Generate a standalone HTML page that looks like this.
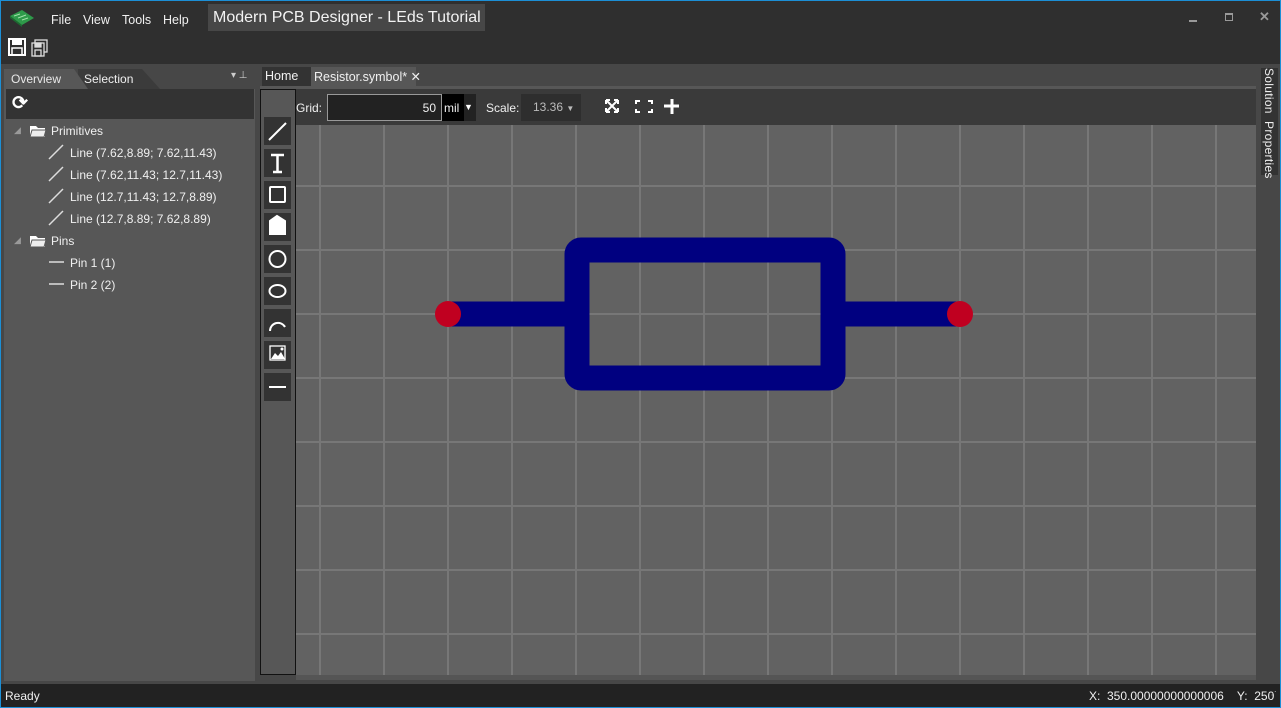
<!DOCTYPE html>
<html><head><meta charset="utf-8"><style>
*{margin:0;padding:0;box-sizing:border-box}
body{width:1281px;height:708px;overflow:hidden;background:#2f2f2f;font-family:"Liberation Sans",sans-serif;font-size:12px;color:#f0f0f0;position:relative}
.abs{position:absolute;white-space:nowrap}
#frame{position:absolute;left:0;top:0;width:1281px;height:708px;border:1px solid #1c8fd6;pointer-events:none;z-index:10}
.menu span{position:absolute;top:13px;font-size:12.5px}
.tool{position:absolute;left:264px;width:27px;height:28px;background:#333}
.it{position:absolute;left:70px}
</style></head><body>
<div id="frame"></div>
<div class="abs" style="left:0;top:0;width:1281px;height:64px;background:#2f2f2f"></div>
<svg class="abs" style="left:8px;top:8px" width="28" height="20"><polygon points="2,8 14,2 26,10 14,17" fill="#2e9a4a"/><polygon points="2,8 14,17 14,19 2,10" fill="#1b6b30"/><path d="M6,8 L12,6 M10,10 L18,7 M14,12 L20,10" stroke="#9fe0a8" stroke-width="1"/></svg>
<div class="menu"><span style="left:51px">File</span><span style="left:83px">View</span><span style="left:122px">Tools</span><span style="left:163px">Help</span></div>
<div class="abs" style="left:208px;top:4px;width:277px;height:27px;background:#474747;font-size:16px;padding:5px 0 0 5px;color:#f2f2f2">Modern PCB Designer - LEds Tutorial</div>
<div class="abs" style="left:1189px;top:20px;width:8px;height:2px;background:#9a9a9a"></div>
<div class="abs" style="left:1225px;top:13px;width:8px;height:8px;border:1px solid #9a9a9a;border-top-width:2px"></div>
<div class="abs" style="left:1259px;top:9px;color:#9a9a9a;font-size:13px;font-weight:bold">✕</div>
<svg class="abs" style="left:8px;top:38px" width="44" height="20"><rect x="1" y="1" width="16" height="16" fill="none" stroke="#fff" stroke-width="2"/><rect x="4" y="1" width="10" height="6" fill="#fff"/><rect x="4" y="10" width="10" height="7" fill="none" stroke="#fff" stroke-width="1.5"/><g transform="translate(24,2)" stroke="#ddd" fill="none" stroke-width="1.3"><rect x="3" y="0" width="12" height="12"/><rect x="0" y="3" width="12" height="13" fill="#2f2f2f"/><rect x="3" y="3" width="6" height="4" fill="#ddd"/><rect x="3" y="10" width="6" height="6"/></g></svg>
<div class="abs" style="left:0;top:64px;width:260px;height:620px;background:#474747"></div>
<div class="abs" style="left:78px;top:69px;width:82px;height:20px;background:#3b3b3b;clip-path:polygon(0 0,64px 0,82px 20px,0 20px)"></div>
<div class="abs" style="left:4px;top:69px;width:84px;height:20px;background:#575757;clip-path:polygon(0 0,70px 0,84px 20px,0 20px)"></div>
<div class="abs" style="left:11px;top:72px;color:#e8e8e8">Overview</div>
<div class="abs" style="left:84px;top:72px">Selection</div>
<div class="abs" style="left:231px;top:70px;font-size:10px;color:#ccc">▾ ⊥</div>
<div class="abs" style="left:4px;top:89px;width:251px;height:592px;background:#575757"></div>
<div class="abs" style="left:6px;top:89px;width:248px;height:30px;background:#333"></div>
<div class="abs" style="left:12px;top:92px;font-size:19px;font-weight:bold;color:#fff">⟳</div>
<div class="abs" style="left:14px;top:125px;font-size:9px;color:#999">◢</div>
<svg class="abs" style="left:29px;top:124px" width="18" height="14"><path d="M1 2h6l2 2h7v9H1z" fill="#fff"/><path d="M3 6h14l-2 7H1z" fill="#eee" stroke="#575757"/></svg>
<div class="abs" style="left:51px;top:124px">Primitives</div>
<div class="abs" style="left:14px;top:235px;font-size:9px;color:#999">◢</div>
<svg class="abs" style="left:29px;top:234px" width="18" height="14"><path d="M1 2h6l2 2h7v9H1z" fill="#fff"/><path d="M3 6h14l-2 7H1z" fill="#eee" stroke="#575757"/></svg>
<div class="abs" style="left:51px;top:234px">Pins</div>
<svg class="abs" style="left:48px;top:144px" width="20" height="150" stroke="#ddd" stroke-width="1.5"><path d="M1 15L15 1M1 37L15 23M1 59L15 45M1 81L15 67M1 118H16M1 140H16"/></svg>
<div class="it" style="top:146px">Line (7.62,8.89; 7.62,11.43)</div>
<div class="it" style="top:168px">Line (7.62,11.43; 12.7,11.43)</div>
<div class="it" style="top:190px">Line (12.7,11.43; 12.7,8.89)</div>
<div class="it" style="top:212px">Line (12.7,8.89; 7.62,8.89)</div>
<div class="it" style="top:256px">Pin 1 (1)</div>
<div class="it" style="top:278px">Pin 2 (2)</div>
<div class="abs" style="left:260px;top:64px;width:997px;height:620px;background:#474747"></div>
<div class="abs" style="left:262px;top:67px;width:49px;height:19px;background:#333;padding:2px 0 0 3px;font-size:12.5px">Home</div>
<div class="abs" style="left:311px;top:67px;width:105px;height:19px;background:#575757;padding:2px 0 0 3px;font-size:12.5px">Resistor.symbol* ✕</div>
<div class="abs" style="left:260px;top:86px;width:996px;height:3px;background:#575757"></div>
<div class="abs" style="left:260px;top:89px;width:36px;height:586px;background:#575757;border:1px solid #111"></div>
<div class="abs" style="left:296px;top:89px;width:960px;height:36px;background:#3a3a3a"></div>
<div class="abs" style="left:296px;top:101px">Grid:</div>
<div class="abs" style="left:327px;top:94px;width:115px;height:27px;background:#222;border:1px solid #999;text-align:right;padding:6px 5px 0 0">50</div>
<div class="abs" style="left:442px;top:94px;width:22px;height:27px;background:#000;padding:7px 0 0 2px">mil</div>
<div class="abs" style="left:464px;top:94px;width:12px;height:27px;background:#222;font-size:9px;padding-top:8px;color:#fff">▼</div>
<div class="abs" style="left:486px;top:101px">Scale:</div>
<div class="abs" style="left:521px;top:94px;width:60px;height:27px;background:#2e2e2e;color:#bbb;padding:6px 0 0 12px">13.36 <span style="font-size:8px">▼</span></div>
<svg class="abs" style="left:604px;top:98px" width="80" height="16" fill="none" stroke="#fff" stroke-width="2"><path d="M2 2l12 12M14 2L2 14M2 2h4M2 2v4M14 2h-4M14 2v4M2 14h4M2 14v-4M14 14h-4M14 14v-4"/><path d="M32 6V3h4M44 3h4v3M48 11v3h-4M36 14h-4v-3"/><path d="M68 1v15M60 8h15" stroke-width="3"/></svg>
<div class="tool" style="top:117px"></div><div class="tool" style="top:149px"></div><div class="tool" style="top:181px"></div><div class="tool" style="top:213px"></div><div class="tool" style="top:245px"></div><div class="tool" style="top:277px"></div><div class="tool" style="top:309px"></div><div class="tool" style="top:341px"></div><div class="tool" style="top:373px"></div>
<svg class="abs" style="left:264px;top:117px" width="27" height="290" fill="none" stroke="#fff" stroke-width="2"><path d="M5 23L22 6"/><path d="M7 38h13M13.5 38v17M9 55h9" stroke-width="2.5"/><rect x="6" y="70" width="15" height="15" rx="1"/><path d="M6 104l7-5 8 5v13H6z" fill="#fff"/><circle cx="13.5" cy="142" r="8"/><ellipse cx="13.5" cy="174" rx="8" ry="6"/><path d="M6 214a8 8 0 0 1 15-4"/><rect x="6" y="229" width="15" height="14" stroke-width="1.3"/><path d="M7 242l4-6 3 3 3-4 4 7z" fill="#fff" stroke="none"/><circle cx="18" cy="232" r="1.5" fill="#fff" stroke="none"/><path d="M5 270h17"/></svg>
<svg class="abs" style="left:296px;top:125px" width="960" height="550">
<rect width="960" height="550" fill="#626262"/>
<g stroke="#777" stroke-width="2">
<path d="M24 0v550M88 0v550M152 0v550M216 0v550M280 0v550M344 0v550M408 0v550M472 0v550M536 0v550M600 0v550M664 0v550M728 0v550M792 0v550M856 0v550M920 0v550"/>
<path d="M0 61h960M0 125h960M0 189h960M0 253h960M0 317h960M0 381h960M0 445h960M0 509h960"/>
</g>
<g stroke="#000080" stroke-width="25" fill="none" stroke-linejoin="round">
<rect x="281" y="125" width="256" height="128" rx="4"/>
<path d="M152 189h129M537 189h127"/>
</g>
<circle cx="152" cy="189" r="13" fill="#c00020"/><circle cx="664" cy="189" r="13" fill="#c00020"/>
</svg>
<div class="abs" style="left:296px;top:675px;width:960px;height:5px;background:#555"></div>
<div class="abs" style="left:1257px;top:64px;width:24px;height:620px;background:#474747"></div>
<div class="abs" style="left:1261px;top:68px;width:17px;height:107px;background:#333"></div>
<div class="abs" style="left:1262px;top:68px;writing-mode:vertical-rl;font-size:12px;letter-spacing:0.3px">Solution&nbsp; Properties</div>
<div class="abs" style="left:0;top:684px;width:1281px;height:24px;background:#222"></div>
<div class="abs" style="left:5px;top:689px">Ready</div>
<div class="abs" style="left:1089px;top:689px">X:&nbsp; 350.00000000000006&nbsp;&nbsp;&nbsp; Y:&nbsp; 250</div>
<div class="abs" style="left:1267px;top:690px;color:#999;font-size:10px">⋰</div>
</body></html>
